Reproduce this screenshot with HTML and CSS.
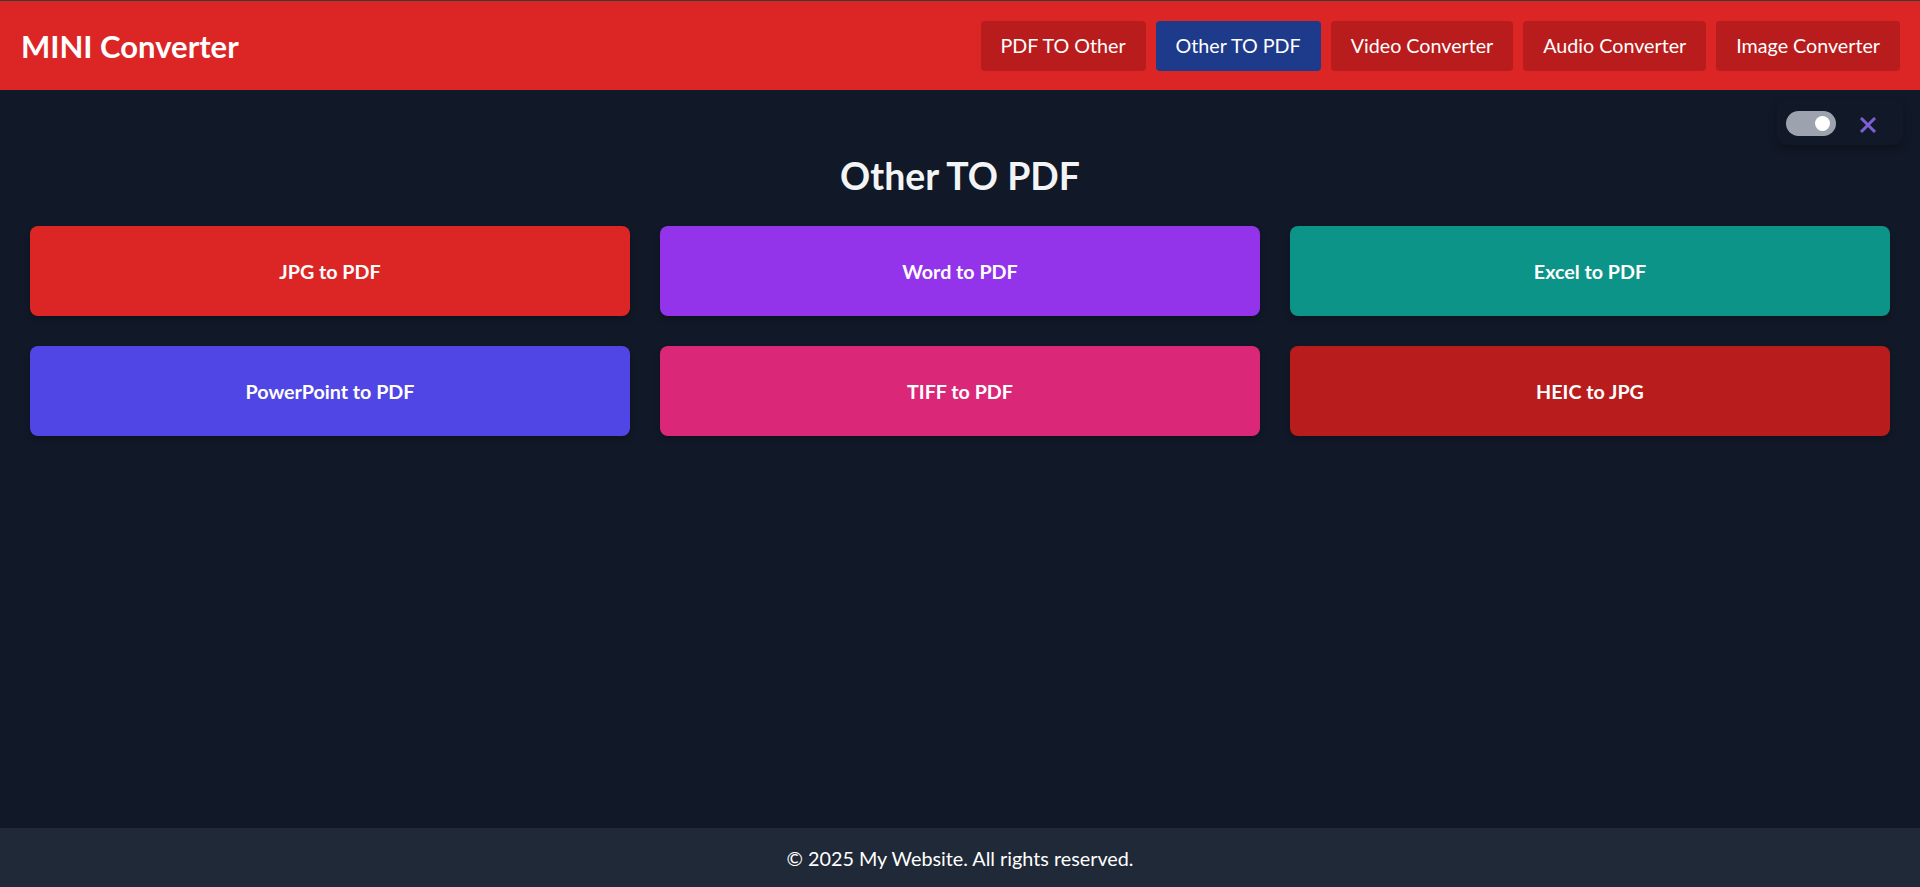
FILE: index.html
```html
<!DOCTYPE html>
<html lang="en">
<head>
<meta charset="utf-8">
<title>MINI Converter</title>
<link rel="stylesheet" href="styles.css">
</head>
<body>
<header class="site-header">
  <div class="logo">MINI Converter</div>
  <nav class="nav">
    <a class="nav-btn" href="#">PDF TO Other</a>
    <a class="nav-btn active" href="#">Other TO PDF</a>
    <a class="nav-btn" href="#">Video Converter</a>
    <a class="nav-btn" href="#">Audio Converter</a>
    <a class="nav-btn" href="#">Image Converter</a>
  </nav>
</header>
<main class="main">
  <div class="controls">
    <span class="toggle"><span class="knob"></span></span>
    <span class="close">
      <svg width="18" height="16" viewBox="0 0 18 16"><path d="M2 1 L16 15 M16 1 L2 15" stroke="#7b5fd3" stroke-width="3" stroke-linecap="butt"/></svg>
    </span>
  </div>
  <h1 class="title">Other TO PDF</h1>
  <div class="grid">
    <a class="card red" href="#">JPG to PDF</a>
    <a class="card purple" href="#">Word to PDF</a>
    <a class="card teal" href="#">Excel to PDF</a>
    <a class="card indigo" href="#">PowerPoint to PDF</a>
    <a class="card pink" href="#">TIFF to PDF</a>
    <a class="card darkred" href="#">HEIC to JPG</a>
  </div>
</main>
<footer class="footer">© 2025 My Website. All rights reserved.</footer>
</body>
</html>
```
FILE: styles.css
```css
* { box-sizing: border-box; }
html, body { margin: 0; padding: 0; }
body {
  min-height: 100vh;
  display: flex;
  flex-direction: column;
  background: #111827;
  color: #fff;
  font-family: Lato, "Open Sans", sans-serif;
}
a { text-decoration: none; color: inherit; }

.site-header {
  display: flex;
  align-items: center;
  justify-content: space-between;
  height: 90px;
  padding: 0 20px 0 21px;
  background: #dc2626;
  border-top: 1px solid #3a3a3a;
}
.logo {
  font-size: 31px;
  font-weight: 700;
  color: #fff;
}
.nav { display: flex; gap: 10px; }
.nav-btn {
  display: block;
  padding: 11px 20px;
  line-height: 28px;
  font-size: 19.7px;
  background: #b91c1c;
  border-radius: 4px;
  color: #fff;
}
.nav-btn.active { background: #1e3a8a; }

.main {
  position: relative;
  flex: 1;
  padding: 66px 30px 30px;
}
.controls {
  position: absolute;
  top: 9px;
  right: 17px;
  display: flex;
  align-items: center;
  gap: 23px;
  padding: 12px 26px 9px 9px;
  border-radius: 10px;
  background: #111827;
  box-shadow: 0 4px 8px rgba(0,0,0,0.25);
}
.toggle {
  position: relative;
  display: block;
  width: 50px;
  height: 25px;
  border-radius: 13px;
  background: #9ca3af;
}
.knob {
  position: absolute;
  top: 5px;
  right: 6px;
  width: 15px;
  height: 15px;
  border-radius: 50%;
  background: #fff;
}
.close { display: block; line-height: 0; margin-top: 3px; }

.title {
  margin: 0 0 30px;
  text-align: center;
  font-size: 37.4px;
  line-height: 40px;
  font-weight: 700;
  color: #f3f4f6;
}
.grid {
  display: grid;
  grid-template-columns: repeat(3, 1fr);
  gap: 30px;
}
.card {
  display: flex;
  align-items: center;
  justify-content: center;
  height: 90px;
  border-radius: 8px;
  font-size: 19.7px;
  font-weight: 700;
  color: #fff;
  box-shadow: 0 4px 6px rgba(0,0,0,0.2);
}
.red { background: #dc2626; }
.purple { background: #9333ea; }
.teal { background: #0d9488; }
.indigo { background: #4f46e5; }
.pink { background: #db2777; }
.darkred { background: #b91c1c; }

.footer {
  height: 59px;
  display: flex;
  align-items: center;
  justify-content: center;
  background: #1f2937;
  font-size: 19.8px;
  color: #fff;
}
```
